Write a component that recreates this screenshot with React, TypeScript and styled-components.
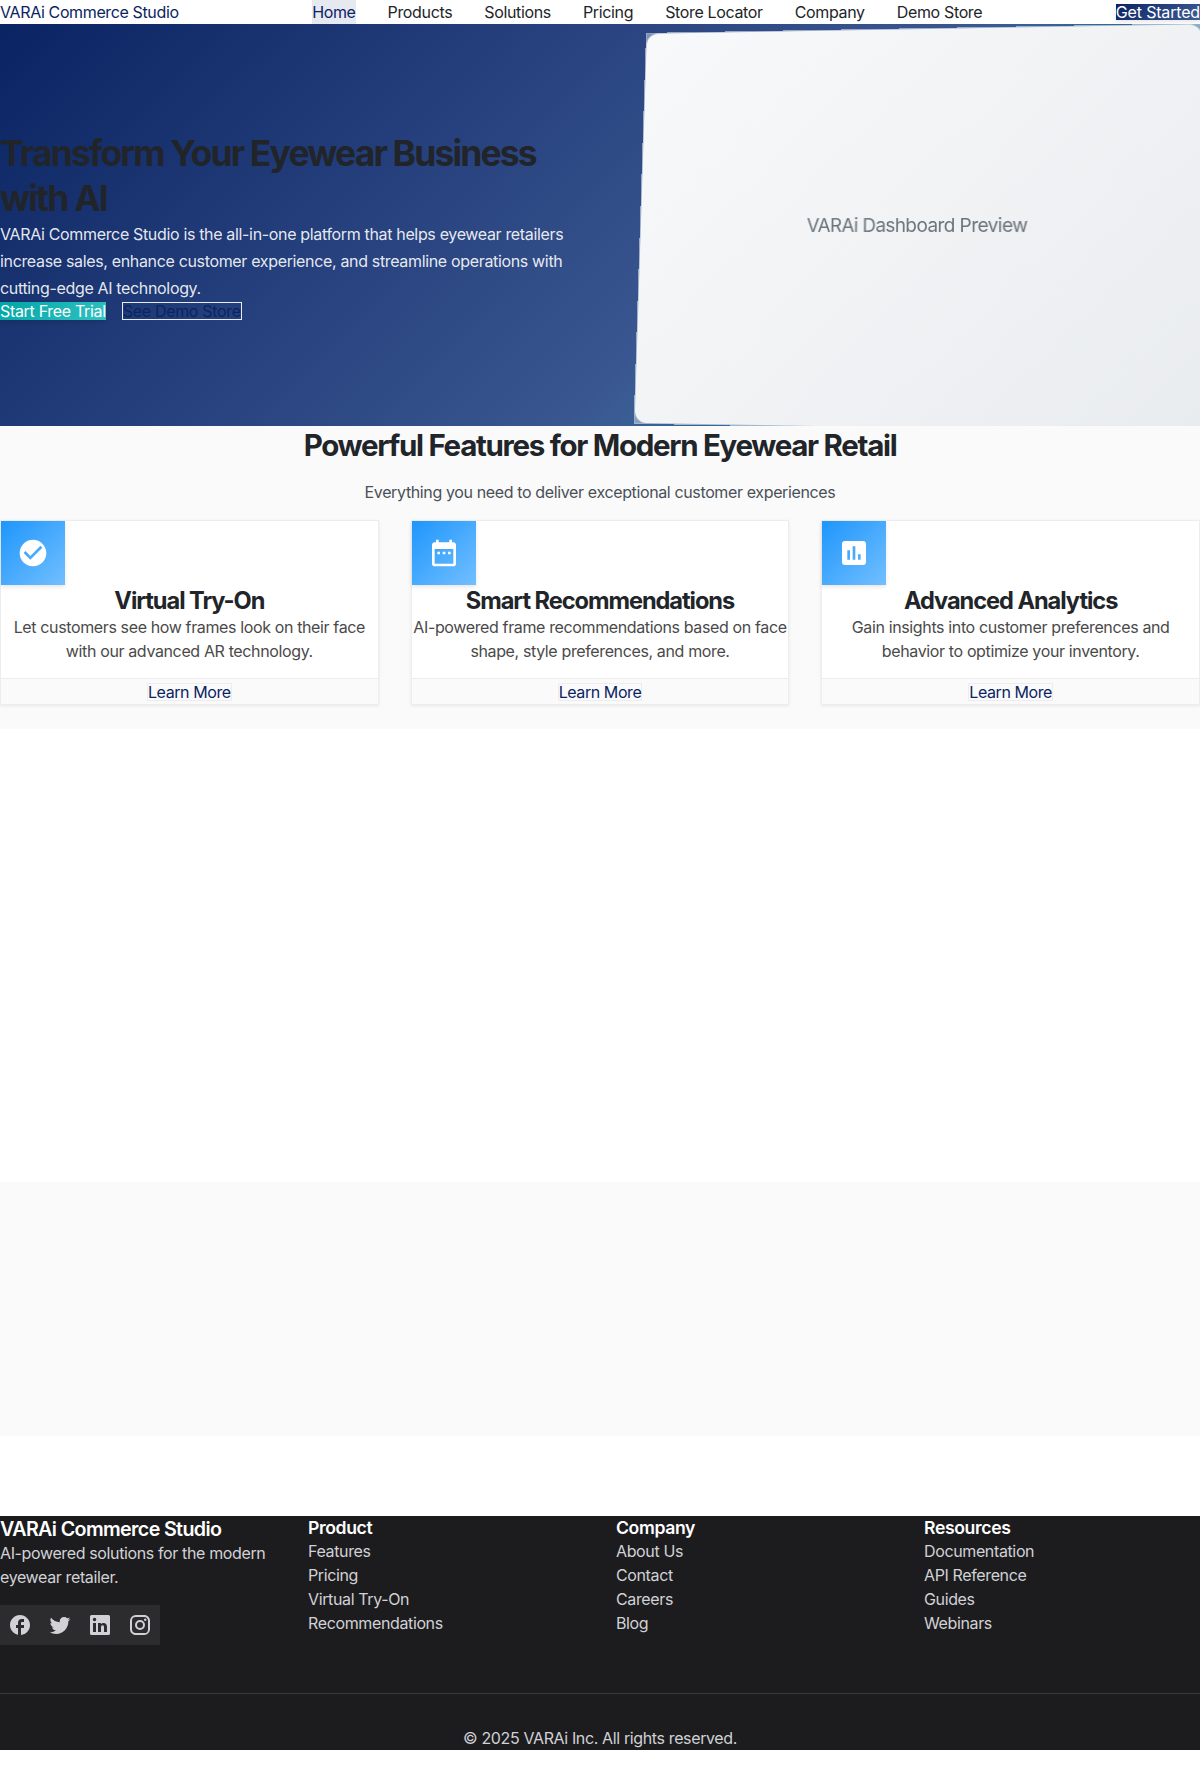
import React from "react";
import styled, { createGlobalStyle, css } from "styled-components";

const Global = createGlobalStyle`
  *, *::before, *::after { box-sizing: border-box; margin: 0; padding: 0; }
  body { font-family: Inter, "Open Sans", sans-serif; font-size: 16px; line-height: 24px; letter-spacing: -0.37px; color: #212529; background: #fff; }
  a { text-decoration: none; color: inherit; }
  ul { list-style: none; }
`;

const Page = styled.div`
  width: 100%;
  overflow: hidden;
`;

const NavBar = styled.header`
  display: flex;
  justify-content: space-between;
  align-items: center;
  height: 24px;
`;

const Brand = styled.a`
  color: #0a2463;
`;

const NavList = styled.nav`
  display: flex;
  gap: 32px;
`;

const NavLink = styled.a<{ $active?: boolean }>`
  letter-spacing: -0.35px;
  color: ${(p) => (p.$active ? "#0a2463" : "#212529")};
  background: ${(p) => (p.$active ? "rgba(10, 36, 99, 0.1)" : "transparent")};
`;

const Button = styled.a<{ $kind: "primary" | "teal" | "outline" | "plain" }>`
  display: inline-block;
  line-height: 16px;
  letter-spacing: -0.32px;
  white-space: nowrap;
  ${(p) =>
    p.$kind === "primary" &&
    css`
      color: #fff;
      letter-spacing: -0.17px;
      background: linear-gradient(135deg, #0a2463, #3e5c96);
      box-shadow: 0 2px 4px rgba(0, 0, 0, 0.1);
    `}
  ${(p) =>
    p.$kind === "teal" &&
    css`
      padding: 1px 0;
      color: #fff;
      background: linear-gradient(135deg, #00a6a6, #33c1c1);
      box-shadow: 0 2px 4px rgba(0, 0, 0, 0.1);
    `}
  ${(p) =>
    p.$kind === "outline" &&
    css`
      color: #0a2463;
      border: 1px solid rgba(255, 255, 255, 0.9);
    `}
  ${(p) =>
    p.$kind === "plain" &&
    css`
      color: #0a2463;
      letter-spacing: -0.42px;
      border: 1px solid #ededf0;
    `}
`;

const Hero = styled.section`
  display: grid;
  grid-template-columns: 1fr 1fr;
  gap: 64px;
  align-items: center;
  height: 402px;
  overflow: hidden;
  background: linear-gradient(135deg, #0a2463 0%, #3a5690 60%, #2fa0b8 100%);
`;

const HeroCopy = styled.div`
  padding-bottom: 1px;
`;

const HeroTitle = styled.h1`
  padding-top: 1px;
  font-size: 35.4px;
  line-height: 45px;
  font-weight: 700;
  letter-spacing: -1.8px;
`;

const HeroText = styled.p`
  line-height: 27px;
  letter-spacing: -0.34px;
  color: rgba(255, 255, 255, 0.9);
`;

const Actions = styled.div`
  display: flex;
  align-items: center;
  gap: 16px;
  height: 18px;
`;

const Preview = styled.div`
  border: 1px solid rgba(255, 255, 255, 0.2);
  background: rgba(255, 255, 255, 0.4);
  transform: perspective(1000px) rotateY(-5deg) rotateX(5deg);
`;

const PreviewScreen = styled.div`
  display: flex;
  align-items: center;
  justify-content: center;
  height: 400px;
  padding-top: 2px;
  border-radius: 12px;
  background: linear-gradient(135deg, #f8f9fa, #e9ecef);
  color: #6c757d;
  font-size: 19px;
  letter-spacing: -0.58px;
`;

const Features = styled.section`
  display: flex;
  flex-direction: column;
  gap: 16px;
  height: 303px;
  background: #fafafa;
`;

const SectionTitle = styled.h2`
  padding-top: 2px;
  text-align: center;
  font-size: 29.5px;
  line-height: 35.5px;
  font-weight: 700;
  letter-spacing: -1.3px;
`;

const SectionLead = styled.p`
  height: 24px;
  line-height: 25px;
  text-align: center;
  color: #495057;
`;

const CardGrid = styled.div`
  display: grid;
  grid-template-columns: repeat(3, 1fr);
  gap: 32px;
`;

const Card = styled.article`
  border: 1px solid #ededf0;
  background: #fff;
  box-shadow: 0 1px 3px rgba(0, 0, 0, 0.08);
`;

const CardIcon = styled.div`
  display: flex;
  align-items: center;
  justify-content: center;
  width: 64px;
  height: 64px;
  color: #fff;
  background: linear-gradient(135deg, #1e96fc, #72bfff);
  box-shadow: 0 2px 4px rgba(0, 0, 0, 0.1);
`;

const CardBody = styled.div`
  height: 157.5px;
  text-align: center;
`;

const CardTitle = styled.h3`
  padding-top: 1.5px;
  font-size: 23.6px;
  line-height: 29px;
  font-weight: 700;
  letter-spacing: -1.05px;
`;

const CardText = styled.p`
  color: #4a4a4a;
`;

const CardFooter = styled.div`
  display: flex;
  align-items: center;
  justify-content: center;
  height: 26px;
  border-top: 1px solid #ededf0;
  background: #fafafa;
`;

const BlankBand = styled.div<{ $height: number; $tint?: boolean }>`
  height: ${(p) => p.$height}px;
  background: ${(p) => (p.$tint ? "#fafafa" : "#fff")};
`;

const Footer = styled.footer`
  height: 234px;
  background: #1c1c1e;
  color: #d1d1d6;
`;

const FooterGrid = styled.div`
  display: grid;
  grid-template-columns: repeat(4, 1fr);
  gap: 32px;
  height: 177px;
`;

const FooterBrand = styled.h3`
  padding-top: 1px;
  color: #fff;
  font-size: 19.7px;
  line-height: 24px;
  font-weight: 600;
  letter-spacing: -0.64px;
`;

const FooterHeading = styled.h4`
  color: #fff;
  font-size: 17.6px;
  line-height: 23px;
  font-weight: 600;
  letter-spacing: -0.36px;
`;

const Socials = styled.div`
  display: flex;
  margin-top: 16px;
`;

const SocialLink = styled.a`
  display: flex;
  align-items: center;
  justify-content: center;
  width: 40px;
  height: 40px;
  background: #2c2c2e;
`;

const Copyright = styled.div`
  height: 57px;
  padding-top: 32px;
  border-top: 1px solid #3a3a3c;
  text-align: center;
`;

const Icon = ({ d, size }: { d: string; size: number }) => (
  <svg width={size} height={size} viewBox="0 0 24 24" fill="currentColor">
    <path d={d} />
  </svg>
);

const nav = ["Home", "Products", "Solutions", "Pricing", "Store Locator", "Company", "Demo Store"];

const cards = [
  {
    title: "Virtual Try-On",
    text: "Let customers see how frames look on their face with our advanced AR technology.",
    icon: "M12 2C6.48 2 2 6.48 2 12s4.48 10 10 10 10-4.48 10-10S17.52 2 12 2zm-2 15l-5-5 1.41-1.41L10 14.17l7.59-7.59L19 8l-9 9z",
  },
  {
    title: "Smart Recommendations",
    text: "AI-powered frame recommendations based on face shape, style preferences, and more.",
    icon: "M9 11H7v2h2v-2zm4 0h-2v2h2v-2zm4 0h-2v2h2v-2zm2-7h-1V2h-2v2H8V2H6v2H5c-1.11 0-1.99.9-1.99 2L3 20c0 1.1.89 2 2 2h14c1.1 0 2-.9 2-2V6c0-1.1-.9-2-2-2zm0 16H5V9h14v11z",
  },
  {
    title: "Advanced Analytics",
    text: "Gain insights into customer preferences and behavior to optimize your inventory.",
    icon: "M19 3H5c-1.1 0-2 .9-2 2v14c0 1.1.9 2 2 2h14c1.1 0 2-.9 2-2V5c0-1.1-.9-2-2-2zM9 17H7v-7h2v7zm4 0h-2V7h2v10zm4 0h-2v-4h2v4z",
  },
];

const socials = [
  "M22 12c0-5.52-4.48-10-10-10S2 6.48 2 12c0 4.84 3.44 8.87 8 9.8V15H8v-3h2V9.5C10 7.57 11.57 6 13.5 6H16v3h-2c-.55 0-1 .45-1 1v2h3v3h-3v6.95c5.05-.5 9-4.76 9-9.95z",
  "M22.46 6c-.77.35-1.6.58-2.46.69.88-.53 1.56-1.37 1.88-2.38-.83.5-1.75.85-2.72 1.05C18.37 4.5 17.26 4 16 4c-2.35 0-4.27 1.92-4.27 4.29 0 .34.04.67.11.98C8.28 9.09 5.11 7.38 3 4.79c-.37.63-.58 1.37-.58 2.15 0 1.49.75 2.81 1.91 3.56-.71 0-1.37-.2-1.95-.5v.03c0 2.08 1.48 3.82 3.44 4.21a4.22 4.22 0 0 1-1.93.07 4.28 4.28 0 0 0 4 2.98 8.521 8.521 0 0 1-5.33 1.84c-.34 0-.68-.02-1.02-.06C3.44 20.29 5.7 21 8.12 21 16 21 20.33 14.46 20.33 8.79c0-.19 0-.37-.01-.56.84-.6 1.56-1.36 2.14-2.23z",
  "M20.5 2h-17A1.5 1.5 0 0 0 2 3.5v17A1.5 1.5 0 0 0 3.5 22h17a1.5 1.5 0 0 0 1.5-1.5v-17A1.5 1.5 0 0 0 20.5 2zM8 19H5v-9h3zM6.5 8.25A1.75 1.75 0 1 1 8.3 6.5a1.78 1.78 0 0 1-1.8 1.75zM19 19h-3v-4.74c0-1.42-.6-1.93-1.38-1.93A1.74 1.74 0 0 0 13 14.19V19h-3v-9h2.9v1.3a3.11 3.11 0 0 1 2.7-1.4c1.55 0 3.36.86 3.36 3.66z",
  "M7.8 2h8.4C19.4 2 22 4.6 22 7.8v8.4a5.8 5.8 0 0 1-5.8 5.8H7.8C4.6 22 2 19.4 2 16.2V7.8A5.8 5.8 0 0 1 7.8 2m-.2 2A3.6 3.6 0 0 0 4 7.6v8.8C4 18.39 5.61 20 7.6 20h8.8a3.6 3.6 0 0 0 3.6-3.6V7.6C20 5.61 18.39 4 16.4 4H7.6m9.65 1.5a1.25 1.25 0 0 1 1.25 1.25A1.25 1.25 0 0 1 17.25 8 1.25 1.25 0 0 1 16 6.75a1.25 1.25 0 0 1 1.25-1.25M12 7a5 5 0 0 1 5 5 5 5 0 0 1-5 5 5 5 0 0 1-5-5 5 5 0 0 1 5-5m0 2a3 3 0 0 0-3 3 3 3 0 0 0 3 3 3 3 0 0 0 3-3 3 3 0 0 0-3-3z",
];

const columns = [
  { title: "Product", links: ["Features", "Pricing", "Virtual Try-On", "Recommendations"] },
  { title: "Company", links: ["About Us", "Contact", "Careers", "Blog"] },
  { title: "Resources", links: ["Documentation", "API Reference", "Guides", "Webinars"] },
];

export default function App() {
  return (
    <Page>
      <Global />
      <NavBar>
        <Brand href="#">VARAi Commerce Studio</Brand>
        <NavList>
          {nav.map((n, i) => (
            <NavLink key={n} href="#" $active={i === 0}>{n}</NavLink>
          ))}
        </NavList>
        <Button href="#" $kind="primary">Get Started</Button>
      </NavBar>
      <Hero>
        <HeroCopy>
          <HeroTitle>Transform Your Eyewear Business with AI</HeroTitle>
          <HeroText>
            VARAi Commerce Studio is the all-in-one platform that helps eyewear retailers increase sales, enhance
            customer experience, and streamline operations with cutting-edge AI technology.
          </HeroText>
          <Actions>
            <Button href="#" $kind="teal">Start Free Trial</Button>
            <Button href="#" $kind="outline">See Demo Store</Button>
          </Actions>
        </HeroCopy>
        <Preview>
          <PreviewScreen>VARAi Dashboard Preview</PreviewScreen>
        </Preview>
      </Hero>
      <Features>
        <SectionTitle>Powerful Features for Modern Eyewear Retail</SectionTitle>
        <SectionLead>Everything you need to deliver exceptional customer experiences</SectionLead>
        <CardGrid>
          {cards.map((c) => (
            <Card key={c.title}>
              <CardBody>
                <CardIcon><Icon d={c.icon} size={32} /></CardIcon>
                <CardTitle>{c.title}</CardTitle>
                <CardText>{c.text}</CardText>
              </CardBody>
              <CardFooter>
                <Button href="#" $kind="plain">Learn More</Button>
              </CardFooter>
            </Card>
          ))}
        </CardGrid>
      </Features>
      <BlankBand $height={453} />
      <BlankBand $height={254} $tint />
      <BlankBand $height={80} />
      <Footer>
        <FooterGrid>
          <div>
            <FooterBrand>VARAi Commerce Studio</FooterBrand>
            <p>AI-powered solutions for the modern eyewear retailer.</p>
            <Socials>
              {socials.map((d) => (
                <SocialLink key={d} href="#"><Icon d={d} size={24} /></SocialLink>
              ))}
            </Socials>
          </div>
          {columns.map((c) => (
            <div key={c.title}>
              <FooterHeading>{c.title}</FooterHeading>
              <ul>
                {c.links.map((l) => (
                  <li key={l}><a href="#">{l}</a></li>
                ))}
              </ul>
            </div>
          ))}
        </FooterGrid>
        <Copyright>© 2025 VARAi Inc. All rights reserved.</Copyright>
      </Footer>
    </Page>
  );
}
